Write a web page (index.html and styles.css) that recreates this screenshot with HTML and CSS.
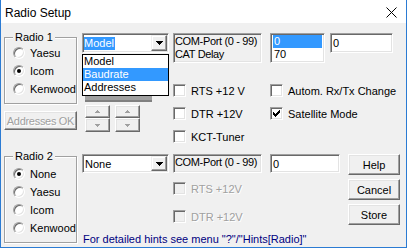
FILE: index.html
```html
<!DOCTYPE html>
<html lang="en">
<head>
    <meta charset="UTF-8">
    <title>Radio Setup</title>
    <link rel="stylesheet" href="styles.css">
</head>
<body>
<div class="window">
    <div class="titlebar">
        <span class="title">Radio Setup</span>
        <svg class="close" width="11" height="11" viewBox="0 0 11 11"><path d="M0.5 0.5L10.5 10.5M10.5 0.5L0.5 10.5" stroke="#000" stroke-width="1" fill="none"/></svg>
    </div>

    <div class="client">
        <!-- Radio 1 -->
        <div class="top">
            <div class="leftcol">
                <fieldset class="group">
                    <legend>Radio 1</legend>
                    <label class="radio"><i></i>Yaesu</label>
                    <label class="radio on"><i></i>Icom</label>
                    <label class="radio"><i></i>Kenwood</label>
                </fieldset>
                <button class="btn disabled addr">Addresses OK</button>
            </div>

            <div class="main">
                <div class="row1">
                    <div class="combo-wrap">
                        <div class="combo"><span class="sel">Model</span><span class="arrow"><svg width="7" height="4" viewBox="0 0 7 4"><path d="M0 0H7V1H6V2H5V3H4V4H3V3H2V2H1V1H0Z"/></svg></span></div>
                        <div class="dropshadow"></div>
                        <ul class="droplist">
                            <li>Model</li>
                            <li class="hl">Baudrate</li>
                            <li>Addresses</li>
                        </ul>
                    </div>
                    <div class="labelbox tall">COM-Port (0 - 99)<br>CAT Delay</div>
                    <ul class="listbox">
                        <li class="hl">0</li>
                        <li>70</li>
                    </ul>
                    <div class="field top-field">0</div>
                </div>

                <div class="controls">
                    <div class="spinners">
                        <div class="spin">
                            <button class="btn half"><svg width="5" height="3" viewBox="0 0 5 3"><path d="M2 0H3V1H4V2H5V3H0V2H1V1H2Z"/></svg></button>
                            <button class="btn half"><svg width="5" height="3" viewBox="0 0 5 3"><path d="M0 0H5V1H4V2H3V3H2V2H1V1H0Z"/></svg></button>
                        </div>
                        <div class="spin">
                            <button class="btn half"><svg width="5" height="3" viewBox="0 0 5 3"><path d="M2 0H3V1H4V2H5V3H0V2H1V1H2Z"/></svg></button>
                            <button class="btn half"><svg width="5" height="3" viewBox="0 0 5 3"><path d="M0 0H5V1H4V2H3V3H2V2H1V1H0Z"/></svg></button>
                        </div>
                    </div>
                    <div class="checks">
                        <label class="check"><i></i>RTS +12 V</label>
                        <label class="check"><i></i>DTR +12V</label>
                        <label class="check"><i></i>KCT-Tuner</label>
                    </div>
                    <div class="checks">
                        <label class="check"><i></i>Autom. Rx/Tx Change</label>
                        <label class="check"><i><svg width="9" height="9" viewBox="0 0 9 9"><path d="M1 3H2V4H3V5H4V4H5V3H6V2H7V1H8V4H7V5H6V6H5V7H4V8H3V7H2V6H1Z"/></svg></i>Satellite Mode</label>
                    </div>
                </div>
            </div>
        </div>

        <!-- Radio 2 -->
        <div class="bottom">
            <fieldset class="group group2">
                <legend>Radio 2</legend>
                <label class="radio on"><i></i>None</label>
                <label class="radio"><i></i>Yaesu</label>
                <label class="radio"><i></i>Icom</label>
                <label class="radio"><i></i>Kenwood</label>
            </fieldset>

            <div class="mid">
                <div class="row2">
                    <div class="combo"><span class="plain">None</span><span class="arrow"><svg width="7" height="4" viewBox="0 0 7 4"><path d="M0 0H7V1H6V2H5V3H4V4H3V3H2V2H1V1H0Z"/></svg></span></div>
                    <div class="labelbox">COM-Port (0 - 99)</div>
                    <div class="field bottom-field">0</div>
                </div>
                <div class="checks off">
                    <label class="check"><i></i>RTS +12V</label>
                    <label class="check"><i></i>DTR +12V</label>
                </div>
                <div class="hint">For detailed hints see menu "?"/"Hints[Radio]"</div>
            </div>

            <div class="buttons">
                <button class="btn">Help</button>
                <button class="btn">Cancel</button>
                <button class="btn">Store</button>
            </div>
        </div>
    </div>
</div>
</body>
</html>
```

FILE: styles.css
```css
* {
    box-sizing: border-box;
}
body {
    margin: 0;
    background: #fff;
    font-family: "Liberation Sans", Arial, sans-serif;
    font-size: 11px;
    color: #000;
}
.window {
    width: 407px;
    height: 248px;
    background: #f0f0f0;
    border: 1px solid #2b7bd3;
    border-top: none;
    overflow: hidden;
}
.titlebar {
    height: 23px;
    background: #fff;
    display: flex;
    align-items: center;
    justify-content: space-between;
    padding: 2px 9px 0 4px;
}
.title {
    font-size: 12px;
}
.client {
    padding: 8px 0 0 3px;
}
.top, .bottom {
    display: flex;
    align-items: flex-start;
}
.bottom {
    margin-top: 7px;
}
.leftcol {
    width: 73px;
}

/* group boxes */
.group {
    width: 73px;
    margin: 0;
    padding: 0 0 5px 8px;
    border: 1px solid #a0a0a0;
    box-shadow: inset 1px 1px 0 #fff, 1px 1px 0 #fff;
}
.group legend {
    padding: 0 2px;
    line-height: 13px;
    background: #f0f0f0;
}
.group2 {
    padding-top: 2px;
}
.radio {
    display: flex;
    align-items: center;
    gap: 5px;
    height: 18px;
}
.radio i {
    position: relative;
    width: 12px;
    height: 12px;
    border-radius: 50%;
    background: #fff;
    border: 1px solid;
    border-color: #a0a0a0 #fff #fff #a0a0a0;
    box-shadow: inset 1px 1px 0 #696969, inset -1px -1px 0 #e3e3e3;
}
.radio.on i::after {
    content: "";
    position: absolute;
    left: 3px;
    top: 3px;
    width: 4px;
    height: 4px;
    border-radius: 50%;
    background: #000;
}

/* buttons */
.btn {
    display: flex;
    align-items: center;
    justify-content: center;
    padding: 0;
    font: inherit;
    color: #000;
    background: #f0f0f0;
    border: 1px solid;
    border-color: #fff #696969 #696969 #fff;
    box-shadow: inset -1px -1px 0 #a0a0a0, inset 1px 1px 0 #e3e3e3;
}
.disabled {
    color: #a0a0a0;
    text-shadow: 1px 1px 0 #fff;
}
.addr {
    width: 73px;
    height: 19px;
    margin-top: 7px;
    letter-spacing: -0.3px;
    white-space: nowrap;
}

/* main area */
.main {
    margin-left: 5px;
    padding-top: 2px;
}
.row1, .row2 {
    display: flex;
    align-items: flex-start;
}
.combo, .labelbox, .listbox, .field {
    border: 1px solid;
    border-color: #a0a0a0 #fff #fff #a0a0a0;
    box-shadow: inset 1px 1px 0 #696969, inset -1px -1px 0 #e3e3e3;
}
.combo-wrap {
    position: relative;
}
.combo {
    width: 87px;
    height: 20px;
    padding: 1px;
    background: #fff;
    display: flex;
    align-items: center;
    justify-content: space-between;
}
.row2 .combo {
    height: 19px;
}
.sel {
    background: #3399ff;
    color: #fff;
    line-height: 13px;
    padding: 0 1px 0 0;
}
.plain {
    padding-left: 1px;
}
.arrow {
    width: 16px;
    height: 100%;
    display: flex;
    align-items: center;
    justify-content: center;
    background: #f0f0f0;
    border: 1px solid;
    border-color: #f0f0f0 #696969 #696969 #f0f0f0;
    box-shadow: inset -1px -1px 0 #a0a0a0, inset 1px 1px 0 #fff;
}
.droplist {
    position: absolute;
    top: 21px;
    left: 0;
    width: 87px;
    margin: 0;
    padding: 0 0 1px;
    list-style: none;
    background: #fff;
    border: 1px solid #000;
}
.droplist li {
    line-height: 13px;
    padding-left: 1px;
}
.hl {
    background: #3399ff;
    color: #fff;
}
.dropshadow {
    position: absolute;
    top: 63px;
    left: 3px;
    width: 67px;
    height: 6px;
    background: #a0a0a0;
    border-bottom: 2px solid #808080;
}
.labelbox {
    width: 89px;
    height: 19px;
    margin-left: 4px;
    padding: 0 0 0 1px;
    line-height: 15px;
    letter-spacing: -0.35px;
    white-space: nowrap;
    overflow: hidden;
}
.labelbox.tall {
    height: 30px;
    padding-top: 1px;
    line-height: 13px;
}
.listbox {
    width: 55px;
    height: 30px;
    margin: 0 0 0 8px;
    padding: 1px 2px;
    list-style: none;
    background: #fff;
}
.listbox li {
    line-height: 13px;
    padding-left: 1px;
}
.field {
    background: #fff;
    padding-left: 2px;
    display: flex;
    align-items: center;
}
.top-field {
    width: 63px;
    height: 20px;
    margin-left: 5px;
}
.bottom-field {
    width: 70px;
    height: 19px;
    margin-left: 8px;
}

/* checkboxes and spinners */
.controls {
    display: grid;
    grid-template-columns: 91px 97px auto;
    padding-top: 21px;
}
.spinners {
    display: flex;
    gap: 5px;
    margin: 21px 0 0 3px;
}
.spin {
    width: 25px;
}
.half {
    width: 25px;
    height: 13px;
}
.half + .half {
    height: 14px;
}
.half svg {
    fill: #a0a0a0;
}
.checks {
    display: flex;
    flex-direction: column;
    gap: 10px;
}
.check {
    display: flex;
    align-items: center;
    gap: 5px;
    height: 13px;
    white-space: nowrap;
}
.check i {
    width: 13px;
    height: 13px;
    padding: 1px;
    background: #fff;
    border: 1px solid;
    border-color: #a0a0a0 #fff #fff #a0a0a0;
    box-shadow: inset 1px 1px 0 #696969, inset -1px -1px 0 #e3e3e3;
    display: flex;
}
.checks.off {
    gap: 15px;
    margin: 9px 0 0 91px;
    color: #a0a0a0;
    text-shadow: 1px 1px 0 #fff;
}
.checks.off .check i {
    background: #f0f0f0;
}

/* bottom */
.mid {
    margin-left: 5px;
    padding-top: 4px;
}
.hint {
    margin: 10px 0 0 1px;
    line-height: 13px;
    color: #000080;
    white-space: nowrap;
}
.buttons {
    display: flex;
    flex-direction: column;
    gap: 4px;
    width: 52px;
    margin-left: 8px;
    padding-top: 4px;
}
.buttons .btn {
    height: 21px;
}
```
